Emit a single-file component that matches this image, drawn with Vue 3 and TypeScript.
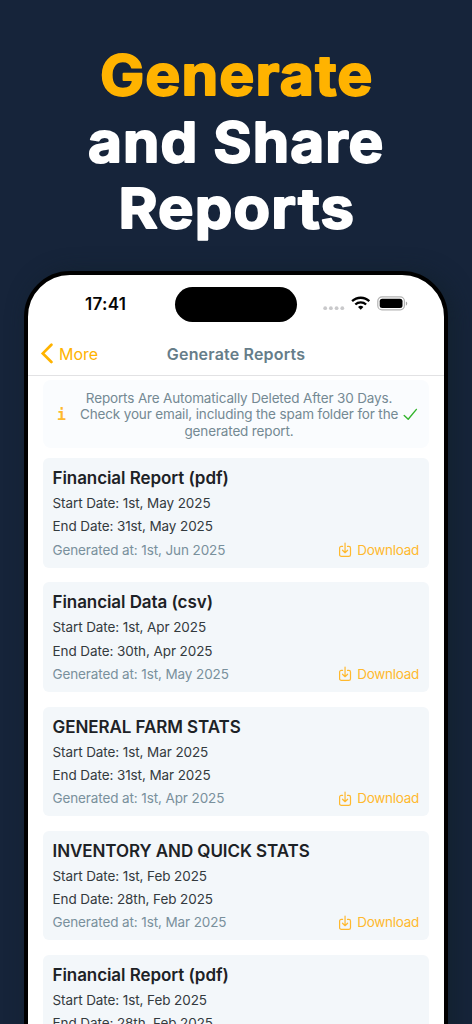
<script setup lang="ts">
interface Report {
  title: string
  start: string
  end: string
  generated: string
}

const headline = [
  { text: 'Generate', y: 95.2, x: 100, width: 273.5, accent: true },
  { text: 'and Share', y: 161.7, x: 88, width: 296.5, accent: false },
  { text: 'Reports', y: 228, x: 118.5, width: 236.5, accent: false },
]

const reports: Report[] = [
  { title: 'Financial Report (pdf)', start: '1st, May 2025', end: '31st, May 2025', generated: '1st, Jun 2025' },
  { title: 'Financial Data (csv)', start: '1st, Apr 2025', end: '30th, Apr 2025', generated: '1st, May 2025' },
  { title: 'GENERAL FARM STATS', start: '1st, Mar 2025', end: '31st, Mar 2025', generated: '1st, Apr 2025' },
  { title: 'INVENTORY AND QUICK STATS', start: '1st, Feb 2025', end: '28th, Feb 2025', generated: '1st, Mar 2025' },
  { title: 'Financial Report (pdf)', start: '1st, Feb 2025', end: '28th, Feb 2025', generated: '1st, Mar 2025' },
]
</script>

<template>
  <main class="poster">
    <svg class="headline" width="472" height="271" viewBox="0 0 472 271">
      <text
        v-for="line in headline"
        :key="line.text"
        :x="line.x"
        :y="line.y"
        :textLength="line.width"
        lengthAdjust="spacingAndGlyphs"
        :class="{ accent: line.accent }"
      >{{ line.text }}</text>
    </svg>

    <section class="phone">
      <div class="status">
        <span class="time">17:41</span>
        <span class="island"></span>
        <svg class="signals" width="86" height="18" viewBox="0 -0.6 86 18">
          <g fill="#c9c9cb">
            <circle cx="3.2" cy="13.6" r="1.9" />
            <circle cx="8.9" cy="13.6" r="1.9" />
            <circle cx="14.6" cy="13.6" r="1.9" />
            <circle cx="20.3" cy="13.6" r="1.9" />
          </g>
          <g fill="none" stroke="#000" stroke-width="2.3">
            <path d="M30.1 6.6a12.4 12.4 0 0 1 17.2 0" />
            <path d="M33.3 9.9a7.8 7.8 0 0 1 10.8 0" />
          </g>
          <path d="M38.7 15.1l-2.7-2.7a3.9 3.9 0 0 1 5.4 0z" fill="#000" />
          <rect x="55.8" y="2.3" width="26.6" height="13" rx="4.2" fill="#fff" stroke="#b3b3b3" stroke-width="1.2" />
          <rect x="57.7" y="4.2" width="22.8" height="9.2" rx="2.5" fill="#000" />
          <path d="M83.9 7v4.2c1.8-.7 1.8-3.5 0-4.2z" fill="#a5a5a5" />
        </svg>
      </div>

      <header class="nav">
        <span class="back">
          <svg width="13" height="21" viewBox="0 0 13 21">
            <path d="M11.4 1.8L2.8 10.4l8.6 8.6" fill="none" stroke="#ffb300" stroke-width="2.7" stroke-linecap="round" />
          </svg>
          <span class="more">More</span>
        </span>
        <h1>Generate Reports</h1>
      </header>

      <div class="content">
        <div class="notice">
          <span class="info">i</span>
          <p>
            <span>Reports Are Automatically Deleted After 30 Days.</span><br />
            <span>Check your email, including the spam folder for the</span><br />
            <span>generated report.</span>
          </p>
          <svg class="check" width="15" height="13" viewBox="0 0 15 13">
            <path d="M1.2 7.5l4 3.8L13.4 1.4" fill="none" stroke="#33b42c" stroke-width="1.4" stroke-linecap="round" stroke-linejoin="round" />
          </svg>
        </div>

        <article v-for="(report, i) in reports" :key="i" class="card">
          <h2>{{ report.title }}</h2>
          <p>Start Date: {{ report.start }}</p>
          <p>End Date: {{ report.end }}</p>
          <div class="foot">
            <p class="generated">Generated at: {{ report.generated }}</p>
            <span class="download">
              <svg width="14" height="16" viewBox="0 0 14 16">
                <g fill="none" stroke="#ffb92e" stroke-width="1.2" stroke-linecap="round" stroke-linejoin="round">
                  <path d="M4.6 4.4H3.3A1.7 1.7 0 0 0 1.6 6.1v6.6a1.7 1.7 0 0 0 1.7 1.7h7.5a1.7 1.7 0 0 0 1.7-1.7V6.1a1.7 1.7 0 0 0-1.7-1.7H9.5" />
                  <path d="M7.05 1v9.6M4.5 8.2l2.55 2.5L9.6 8.2" />
                </g>
              </svg>
              <span>Download</span>
            </span>
          </div>
        </article>
      </div>
    </section>
  </main>
</template>

<style>
html,
body {
  margin: 0;
  background: #16243a;
}
</style>

<style scoped>
.poster {
  width: 472px;
  height: 1024px;
  overflow: hidden;
  background: #16243a;
  font-family: Inter, "Liberation Sans", sans-serif;
}
.headline {
  display: block;
}
.headline text {
  font-size: 55.5px;
  font-weight: 700;
  letter-spacing: 1px;
  fill: #fff;
  stroke: #fff;
  stroke-width: 1.8px;
  stroke-linejoin: round;
}
.headline text.accent {
  fill: #ffb300;
  stroke: #ffb300;
}
.phone {
  box-sizing: border-box;
  width: 424px;
  height: 860px;
  margin: 0 0 0 24px;
  border: 4px solid #000;
  border-radius: 46px;
  background: #fff;
  box-shadow: 6px 2px 22px rgba(18, 32, 44, 0.8);
  overflow: hidden;
}
.status {
  display: flex;
  align-items: flex-start;
  height: 57px;
}
.time {
  width: 90px;
  padding: 19px 0 0 57px;
  font-size: 17px;
  line-height: 20px;
  font-weight: 600;
  letter-spacing: 0.3px;
  color: #050505;
}
.island {
  width: 121.5px;
  height: 35.5px;
  margin-top: 11.5px;
  border-radius: 18px;
  background: #000;
}
.signals {
  margin: 19px 0 0 25px;
}
.nav {
  display: grid;
  grid-template-columns: 1fr auto 1fr;
  align-items: center;
  height: 43px;
  border-bottom: 1px solid #e2e2e4;
}
.back {
  display: flex;
  align-items: center;
  gap: 6px;
  padding-left: 12px;
  color: #ffb300;
  font-size: 16px;
  line-height: 20px;
}
h1 {
  margin: 0;
  font-size: 16px;
  line-height: 20px;
  font-weight: 600;
  letter-spacing: 0.18px;
  color: #667d89;
}
.content {
  padding: 4px 15px 0;
}
.notice {
  box-sizing: border-box;
  display: flex;
  align-items: center;
  height: 68px;
  padding-top: 1px;
  border-radius: 8px;
  background: #fafcfe;
}
.info {
  width: 37px;
  font-family: "DejaVu Sans Mono", monospace;
  font-size: 15px;
  font-weight: 700;
  text-align: center;
  color: #ffb92e;
}
.notice p {
  width: 318px;
  margin: 0;
  font-size: 13.5px;
  line-height: 16.5px;
  letter-spacing: -0.15px;
  text-align: center;
  white-space: nowrap;
  color: #748993;
}
.check {
  margin-left: 5px;
}
.card {
  box-sizing: border-box;
  height: 109.5px;
  margin-bottom: 14.75px;
  padding: 9px 10px 0 9.5px;
  border-radius: 6px;
  background: #f3f7fa;
}
.notice + .card {
  margin-top: 10px;
}
h2 {
  margin: 0 0 3px;
  font-size: 17px;
  line-height: 22px;
  font-weight: 600;
  letter-spacing: -0.07px;
  color: #1d2226;
}
.card p {
  margin: 0;
  font-size: 13.5px;
  line-height: 23.3px;
  letter-spacing: -0.09px;
  color: #333a3e;
}
.foot {
  display: flex;
  justify-content: space-between;
}
.card .generated {
  letter-spacing: -0.11px;
  color: #79909c;
}
.download {
  display: flex;
  align-items: center;
  gap: 5px;
  font-size: 13.5px;
  line-height: 23.3px;
  letter-spacing: -0.28px;
  color: #ffb92e;
}
</style>
